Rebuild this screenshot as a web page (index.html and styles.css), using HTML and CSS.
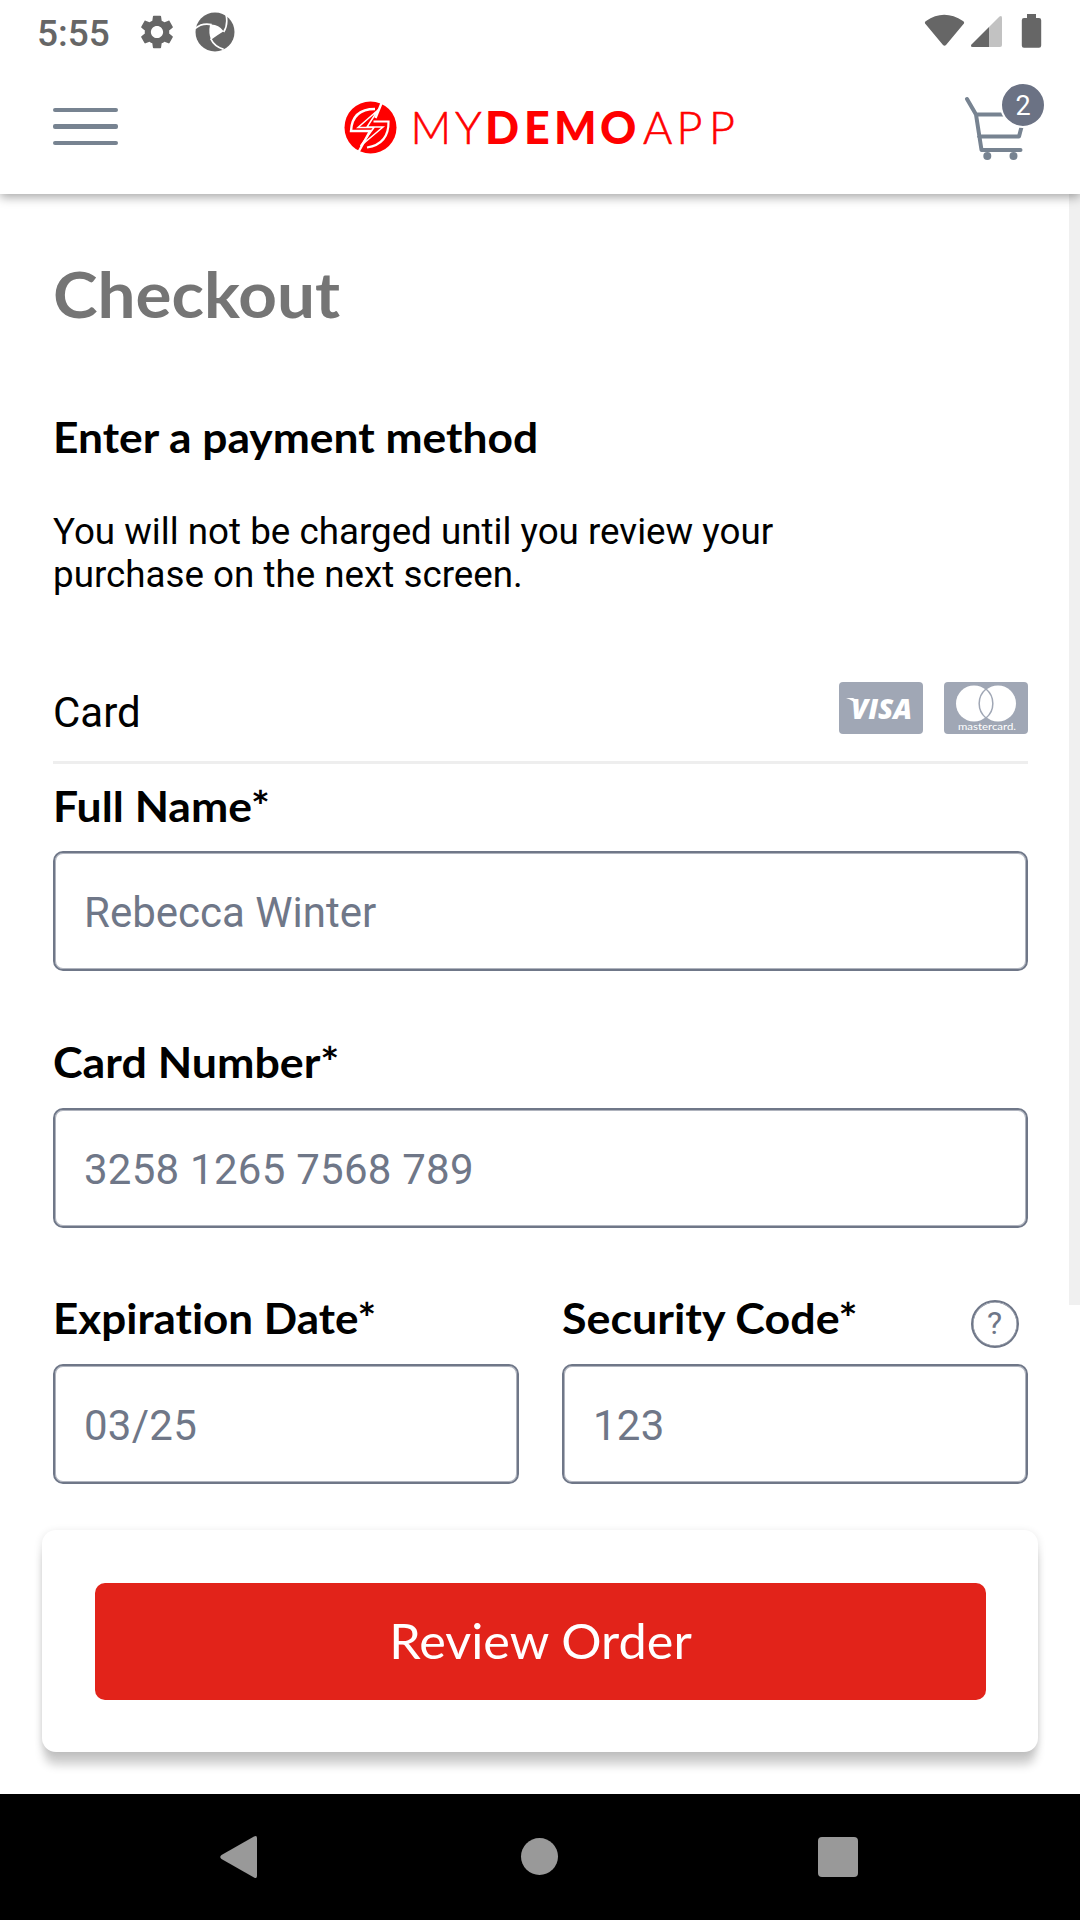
FILE: index.html
```html
<!DOCTYPE html>
<html lang="en">
<head>
<meta charset="utf-8">
<title>Checkout</title>
<link rel="stylesheet" href="styles.css">
</head>
<body>
<header class="top">
  <div class="status">
    <span class="clock">5:55</span>
    <svg class="gear" width="34" height="34" viewBox="2 2 20 20"><path fill="#666" d="M19.14 12.94c.04-.3.06-.61.06-.94 0-.32-.02-.64-.07-.94l2.03-1.58c.18-.14.23-.41.12-.61l-1.92-3.32c-.12-.22-.37-.29-.59-.22l-2.39.96c-.5-.38-1.03-.7-1.62-.94l-.36-2.54c-.04-.24-.24-.41-.48-.41h-3.84c-.24 0-.43.17-.47.41l-.36 2.54c-.59.24-1.13.57-1.62.94l-2.39-.96c-.22-.08-.47 0-.59.22L2.74 8.87c-.12.21-.08.47.12.61l2.03 1.58c-.05.3-.09.63-.09.94s.02.64.07.94l-2.03 1.58c-.18.14-.23.41-.12.61l1.92 3.32c.12.22.37.29.59.22l2.39-.96c.5.38 1.03.7 1.62.94l.36 2.54c.05.24.24.41.48.41h3.84c.24 0 .44-.17.47-.41l.36-2.54c.59-.24 1.13-.56 1.62-.94l2.39.96c.22.08.47 0 .59-.22l1.92-3.32c.12-.22.07-.47-.12-.61l-2.01-1.58zM12 15.6c-1.98 0-3.6-1.62-3.6-3.6s1.62-3.6 3.6-3.6 3.6 1.62 3.6 3.6-1.62 3.6-3.6 3.6z"/></svg>
    <svg class="aperture" width="40" height="40" viewBox="0 0 120 120">
      <circle cx="60" cy="60" r="58.500" fill="#666"/>
      <path fill="#fff" d="M45 38Q70 36 86 58Q70 68 48 83Q40 62 45 38Z"/>
      <path fill="none" stroke="#fff" stroke-width="5" d="M0 50Q20 32 50 38M86 60Q100 38 93 8M47 80Q58 104 86 112"/>
    </svg>
    <svg class="signals" width="120" height="36" viewBox="0 0 120 36">
      <path fill="#666" d="M1.500 10Q0 8.500 2 7Q20-5.500 39 7Q41 8.500 39.500 10L22 31Q20.500 32.500 19 31Z"/>
      <path fill="#c2c2c2" d="M65 13L75.500 2.500Q78 1 78 4V31Q78 33 76 33H65Z"/>
      <path fill="#666" d="M65 13V33H48.500Q46 32.500 47.500 30.500Z"/>
      <path fill="#666" d="M103 0h9v4h3q2.200 0 2.200 2.200V31.500q0 2.200-2.200 2.200h-15q-2.200 0-2.200-2.200V6.200Q97.800 4 100 4h3z"/>
    </svg>
  </div>
  <div class="bar">
    <div class="burger"><i></i><i></i><i></i></div>
    <svg class="logo" width="400" height="60" viewBox="340 98 400 60">
      <circle cx="371.500" cy="127.500" r="26" fill="#f00"/>
      <g fill="none" stroke="#fff" stroke-width="2">
        <path d="M383 102L376.500 118M376 109Q353 109 352 131H371L359.500 152" stroke-width="2.400"/>
        <path d="M379 110L359 127.500H375L361.500 146L384 127H368L379 110Z" stroke-width="1.500"/>
        <path d="M374.500 121.500H389.500Q390 144 368 147.500" stroke-width="2.200"/>
      </g>
      <g fill="#f00" font-family="Lato, sans-serif" font-size="44.800">
        <text class="thin" x="411.500 456" y="144">MY</text>
        <text font-weight="900" x="486 525 555 601" y="144">DEMO</text>
        <text class="thin" x="644 677.500 710" y="144">APP</text>
      </g>
    </svg>
    <div class="cart">
      <svg width="64" height="80" viewBox="0 0 64 80">
        <g fill="none" stroke="#778391" stroke-width="4" stroke-linecap="round" stroke-linejoin="round">
          <path d="M4 16L13 31.500L18.500 67H57.500M13 31.500H55M16 53.500H56L58.500 44"/>
        </g>
        <circle cx="24.300" cy="73" r="4" fill="#778391"/>
        <circle cx="50.500" cy="73" r="4" fill="#778391"/>
      </svg>
      <span class="badge">2</span>
    </div>
  </div>
</header>

<main class="content">
  <h1>Checkout</h1>
  <h2>Enter a payment method</h2>
  <p class="note">You will not be charged until you review your<br>purchase on the next screen.</p>
  <div class="method">
    <span class="method-name">Card</span>
    <svg width="84" height="52" viewBox="0 0 84 52"><rect width="84" height="52" rx="4" fill="#a0a7b5"/><path fill="#fff" d="M7 16H14Q18 17 19 24Q14 18 7 16Z"/><text x="12" y="36.500" textLength="61" lengthAdjust="spacingAndGlyphs" font-family="Open Sans, sans-serif" font-style="italic" font-weight="800" font-size="28" fill="#fff">VISA</text></svg>
    <svg width="84" height="52" viewBox="0 0 84 52"><rect width="84" height="52" rx="4" fill="#a0a7b5"/><circle cx="54" cy="21.500" r="18" fill="#fff"/><circle cx="30" cy="21.500" r="18" fill="#fff"/><path fill="none" stroke="#a0a7b5" stroke-width="1.500" d="M42 7a18.800 18.800 0 0 1 0 29a18.800 18.800 0 0 1 0-29"/><text x="14" y="48" textLength="58" lengthAdjust="spacingAndGlyphs" font-family="Lato, sans-serif" font-weight="400" font-size="10" fill="#fff">mastercard.</text></svg>
  </div>

  <div class="field first"><label class="l-name" for="name">Full Name*</label><input id="name" placeholder="Rebecca Winter"></div>
  <div class="field"><label class="l-card" for="card">Card Number*</label><input id="card" class="digits" placeholder="3258 1265 7568 789"></div>
  <div class="pair">
    <div class="field"><label class="l-exp" for="exp">Expiration Date*</label><input id="exp" class="digits" placeholder="03/25"></div>
    <div class="field">
      <div class="label-row"><label class="l-code" for="code">Security Code*</label><span class="help">?</span></div>
      <input id="code" class="digits" placeholder="123">
    </div>
  </div>
  <div class="scrollbar"></div>
</main>

<section class="action"><button><span>Review Order</span></button></section>

<nav class="sysnav">
  <svg width="1080" height="126" viewBox="0 1794 1080 126" fill="#999">
    <path d="M254 1836.500Q257 1835 257 1838V1876Q257 1879 254 1877.500L221.500 1859Q219 1857 221.500 1855Z"/>
    <circle cx="539.500" cy="1856.500" r="18.500"/>
    <rect x="818" y="1837" width="40" height="40" rx="4"/>
  </svg>
</nav>
</body>
</html>
```
FILE: styles.css
```css
* { box-sizing: border-box; }
body {
  margin: 0;
  width: 1080px;
  height: 1920px;
  display: flex;
  flex-direction: column;
  overflow: hidden;
  background: #fff;
  color: #000;
  font-family: Roboto, sans-serif;
}
.top {
  flex: none;
  height: 194px;
  background: #fff;
  box-shadow: 0 3px 10px rgba(0, 0, 0, .36);
  z-index: 1;
}
.status {
  display: flex;
  align-items: center;
  height: 64px;
  padding: 0 36px 0 37px;
}
.clock {
  width: 103px;
  padding-top: 3px;
  font-size: 37px;
  font-weight: 500;
  line-height: 60px;
  color: #666;
}
.aperture { margin-left: 21px; }
.signals { margin-left: auto; }
.bar {
  display: flex;
  justify-content: space-between;
  height: 130px;
  padding: 0 37px 0 53px;
}
.burger {
  display: flex;
  flex-direction: column;
  gap: 12px;
  width: 65px;
  padding-top: 44px;
}
.burger i {
  height: 4.300px;
  border-radius: 2px;
  background: #778391;
}
.logo { margin: 34px 0 0 -3px; }
.logo .thin {
  font-weight: 300;
  stroke: #f00;
  stroke-width: .6px;
}
.cart {
  position: relative;
  width: 80px;
  height: 100px;
  padding-top: 19px;
}
.cart svg { display: block; }
.badge {
  position: absolute;
  right: -3px;
  top: 18px;
  width: 46px;
  height: 46px;
  border: 2px solid #fff;
  border-radius: 50%;
  background: #6b7284;
  color: #fff;
  font-size: 27px;
  line-height: 44px;
  text-align: center;
}
.content {
  position: relative;
  flex: none;
  height: 1336px;
  padding: 62px 52px 0 53px;
}
h1, h2, label {
  display: block;
  margin: 0;
  font-family: Lato, sans-serif;
  font-weight: 700;
  font-variant-ligatures: none;
  white-space: nowrap;
  transform-origin: 0 0;
}
h1 {
  font-size: 62.500px;
  line-height: 75px;
  color: #757575;
  transform: scaleX(1.078);
}
h2 {
  margin-top: 81px;
  font-size: 41.500px;
  line-height: 50px;
  transform: scaleX(1.068);
}
.note {
  margin: 48px 0 0;
  font-size: 36.750px;
  line-height: 43px;
}
.method {
  display: flex;
  align-items: flex-start;
  gap: 21px;
  height: 82px;
  margin-top: 86px;
  border-bottom: 3px solid #eee;
}
.method-name {
  flex: 1;
  padding-top: 5px;
  font-size: 42px;
  line-height: 52px;
}
.field {
  display: flex;
  flex-direction: column;
  gap: 21px;
  margin-top: 66px;
}
.first { margin-top: 16px; }
.first label { padding-top: 1px; margin-bottom: -1px; }
label {
  font-size: 41.500px;
  line-height: 50px;
}
.l-name { transform: scaleX(1.072); }
.l-card { transform: scaleX(1.078); }
.l-exp { transform: scaleX(1.060); }
.l-code { transform: scaleX(1.079); }
input {
  width: 100%;
  height: 120px;
  padding: 3px 28px 0 29px;
  border: 2px solid #6f7788;
  border-radius: 10px;
  background: #fff;
  box-shadow: inset 0 0 0 1px rgba(111, 119, 136, .55);
  font: 42px Roboto, sans-serif;
}
input.digits { letter-spacing: .25px; }
input::placeholder { color: #6f7788; opacity: 1; }
.pair {
  display: grid;
  grid-template-columns: 466px 466px;
  gap: 43px;
  margin-top: 65px;
}
.pair .field { margin-top: 0; min-width: 0; }
.label-row {
  display: flex;
  justify-content: space-between;
  height: 50px;
}
.help {
  width: 48px;
  height: 48px;
  margin: 7px 9.500px 0 0;
  border: 2px solid #6f7788;
  border-radius: 50%;
  box-shadow: inset 0 0 0 .5px #6f7788;
  color: #6f7788;
  font-size: 32px;
  line-height: 43px;
  text-align: center;
}
.scrollbar {
  position: absolute;
  top: 0;
  right: 0;
  width: 11px;
  height: 1111px;
  background: #f0f0f0;
}
.action {
  flex: none;
  height: 222px;
  margin: 0 42px 42px;
  padding: 53px;
  border-radius: 14px;
  background: #fff;
  box-shadow: 0 15px 10px -2px rgba(0, 0, 0, .19), 0 2px 9px rgba(0, 0, 0, .12);
}
button {
  display: block;
  width: 891px;
  height: 117px;
  padding: 0 0 3px;
  border: 0;
  border-radius: 10px;
  background: #e2231a;
  color: #fff;
  font: 47.500px Lato, sans-serif;
}
button span {
  display: inline-block;
  transform: scaleX(1.062);
}
.sysnav {
  flex: none;
  height: 126px;
  background: #000;
}
.sysnav svg { display: block; }
```
